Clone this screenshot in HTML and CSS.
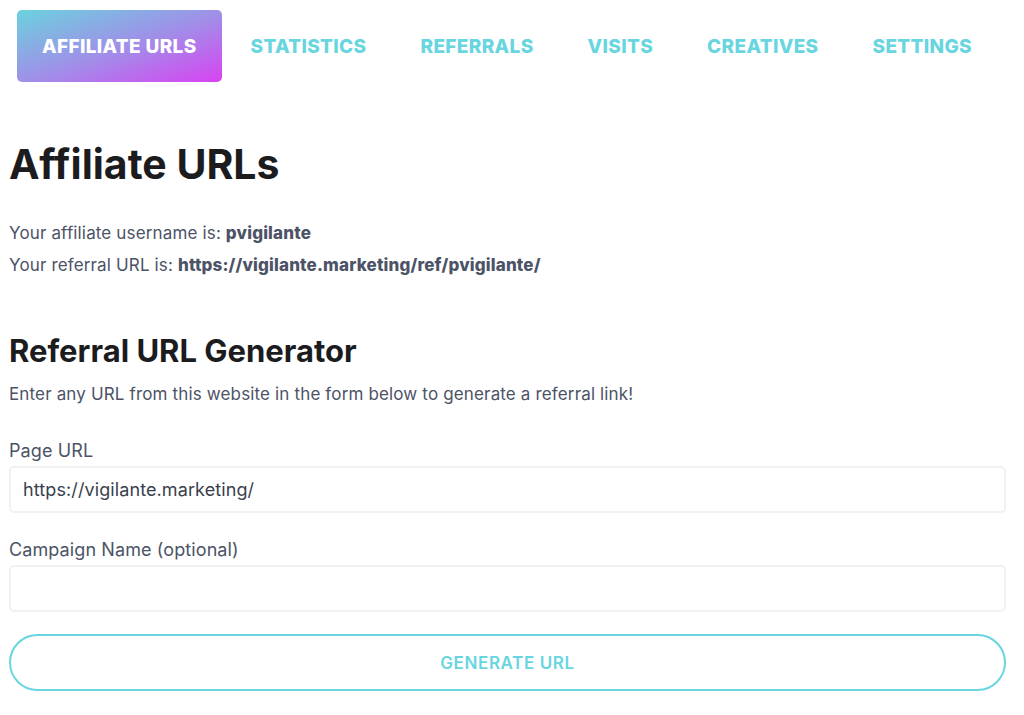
FILE: index.html
```html
<!DOCTYPE html>
<html lang="en">
<head>
    <meta charset="UTF-8">
    <meta name="viewport" content="width=device-width, initial-scale=1.0">
    <title>Affiliate URLs</title>
    <link rel="stylesheet" href="styles.css">
</head>
<body>
    <nav class="tabs">
        <a class="tab active" href="#">Affiliate URLs</a>
        <a class="tab" href="#">Statistics</a>
        <a class="tab" href="#">Referrals</a>
        <a class="tab" href="#">Visits</a>
        <a class="tab" href="#">Creatives</a>
        <a class="tab" href="#">Settings</a>
    </nav>

    <div class="content">
        <h1>Affiliate URLs</h1>
        <p class="info">Your affiliate username is: <strong>pvigilante</strong></p>
        <p class="info">Your referral URL is: <strong>https://vigilante.marketing/ref/pvigilante/</strong></p>

        <h2>Referral URL Generator</h2>
        <p class="intro">Enter any URL from this website in the form below to generate a referral link!</p>

        <form class="generator">
            <label for="pageUrl">Page URL</label>
            <input type="text" id="pageUrl" value="https://vigilante.marketing/">

            <label for="campaign">Campaign Name (optional)</label>
            <input type="text" id="campaign">

            <button type="button">Generate URL</button>
        </form>
    </div>
</body>
</html>
```

FILE: styles.css
```css
body {
    margin: 0;
    padding: 10px 18px 0 9px;
    font-family: Inter, "Open Sans", sans-serif;
    background: #fff;
    color: #4c5366;
}
.tabs {
    display: flex;
    gap: 4px;
    padding-left: 8px;
}
.tab {
    display: flex;
    align-items: center;
    height: 72px;
    padding: 0 25px;
    border-radius: 5px;
    font-size: 19px;
    font-weight: 800;
    letter-spacing: 0.35px;
    text-transform: uppercase;
    text-decoration: none;
    color: #68d5df;
}
.tab.active {
    color: #fff;
    background: linear-gradient(to bottom right, #6bd2de, #a38be9 55%, #d843f2);
}
.content {
    padding-top: 57px;
}
h1 {
    margin: 0 0 28px;
    font-size: 41px;
    font-weight: 700;
    color: #1c1c1e;
}
.info {
    margin: 0;
    font-size: 17px;
    letter-spacing: 0.15px;
    line-height: 32px;
}
.info strong {
    font-weight: 800;
}
h2 {
    margin: 51px 0 15px;
    font-size: 31px;
    font-weight: 700;
    color: #1c1c1e;
}
.intro {
    margin: 0 0 36px;
    font-size: 17px;
    letter-spacing: 0.15px;
}
.generator label {
    display: block;
    font-size: 18px;
    letter-spacing: 0.1px;
    margin-bottom: 5px;
}
.generator input {
    display: block;
    box-sizing: border-box;
    width: 100%;
    height: 47px;
    margin-bottom: 26px;
    padding: 0 12px;
    border: 2px solid #f1f1f1;
    border-radius: 5px;
    font-family: inherit;
    font-size: 18px;
    letter-spacing: 0.1px;
    color: #3a3f4d;
}
.generator button {
    display: block;
    width: 100%;
    height: 57px;
    margin-top: -4px;
    border: 2px solid #68d5df;
    border-radius: 29px;
    background: #fff;
    font-family: inherit;
    font-size: 17px;
    font-weight: 600;
    letter-spacing: 0.6px;
    text-transform: uppercase;
    color: #68d5df;
}
```
